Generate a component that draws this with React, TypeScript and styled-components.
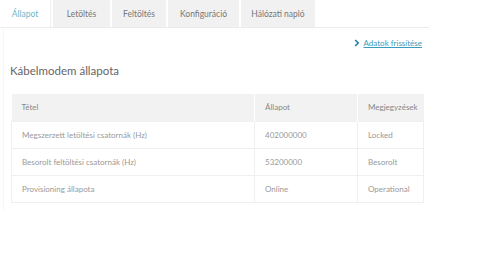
import React from 'react';
import styled, {createGlobalStyle} from 'styled-components';

const GlobalStyle = createGlobalStyle`
  html, body { margin: 0; padding: 0; background: #fff; }
  body { font-family: Lato, "Open Sans", sans-serif; color: #777; }
`;

const Page = styled.div`
  width: 480px;
  height: 270px;
  background: #fff;
`;

const TabBar = styled.div`
  display: flex;
  gap: 2px;
  width: 429px;
  height: 27px;
  border-bottom: 1px solid #ececec;
`;

const Tab = styled.div<{active?: boolean; w: number}>`
  width: ${p => p.w}px;
  display: flex;
  align-items: center;
  justify-content: center;
  font-size: 8.5px;
  background: ${p => p.active ? '#fff' : '#f1f1f1'};
  color: ${p => p.active ? '#6ab8cc' : '#777'};
  border-right: ${p => p.active ? '1px solid #eee' : 'none'};
`;

const Panel = styled.div`
  width: 426px;
  margin-left: 3px;
  border-left: 1px solid #f6f6f6;
  padding-bottom: 8px;
`;

const LinkRow = styled.div`
  display: flex;
  justify-content: flex-end;
  align-items: center;
  gap: 4px;
  height: 30px;
  padding-right: 8px;
`;

const Link = styled.a`
  font-size: 8px;
  color: #3a9cbc;
  text-decoration: underline;
`;

const Title = styled.h2`
  margin: 0;
  padding: 6px 0 0 6px;
  height: 30px;
  font-size: 11.5px;
  font-weight: 400;
  color: #666;
`;

const Table = styled.table`
  margin: 0 0 0 7px;
  width: 412px;
  table-layout: fixed;
  border-collapse: collapse;
  font-size: 8px;
`;

const Th = styled.th<{w?: number}>`
  box-sizing: border-box;
  background: #f2f2f2;
  height: 27px;
  padding: 0 0 0 10px;
  text-align: left;
  font-weight: 400;
  color: #888;
  width: ${p => p.w ? p.w + 'px' : 'auto'};
  border-left: 1px solid #fff;
  &:first-child { border-left: none; }
`;

const Td = styled.td`
  height: 26px;
  padding: 0 0 0 10px;
  border: 1px solid #efefef;
  color: #999;
  white-space: nowrap;
`;

const rows = [
  ['Megszerzett letöltési csatornák (Hz)', '402000000', 'Locked'],
  ['Besorolt feltöltési csatornák (Hz)', '53200000', 'Besorolt'],
  ['Provisioning állapota', 'Online', 'Operational'],
];

export default function App() {
  return (
    <Page>
      <GlobalStyle />
      <TabBar>
        <Tab active w={50}>Állapot</Tab>
        <Tab w={57}>Letöltés</Tab>
        <Tab w={54}>Feltöltés</Tab>
        <Tab w={71}>Konfiguráció</Tab>
        <Tab w={74}>Hálózati napló</Tab>
      </TabBar>
      <Panel>
        <LinkRow>
          <svg width="6" height="8" viewBox="0 0 6 8">
            <path d="M1.2 1 L4.2 4 L1.2 7" stroke="#1f7fa8" strokeWidth="1.6" fill="none" />
          </svg>
          <Link>Adatok frissítése</Link>
        </LinkRow>
        <Title>Kábelmodem állapota</Title>
        <Table>
          <thead>
            <tr>
              <Th w={243}>Tétel</Th>
              <Th w={103}>Állapot</Th>
              <Th w={66}>Megjegyzések</Th>
            </tr>
          </thead>
          <tbody>
            {rows.map(r => (
              <tr key={r[0]}>
                <Td>{r[0]}</Td>
                <Td>{r[1]}</Td>
                <Td>{r[2]}</Td>
              </tr>
            ))}
          </tbody>
        </Table>
      </Panel>
    </Page>
  );
}
